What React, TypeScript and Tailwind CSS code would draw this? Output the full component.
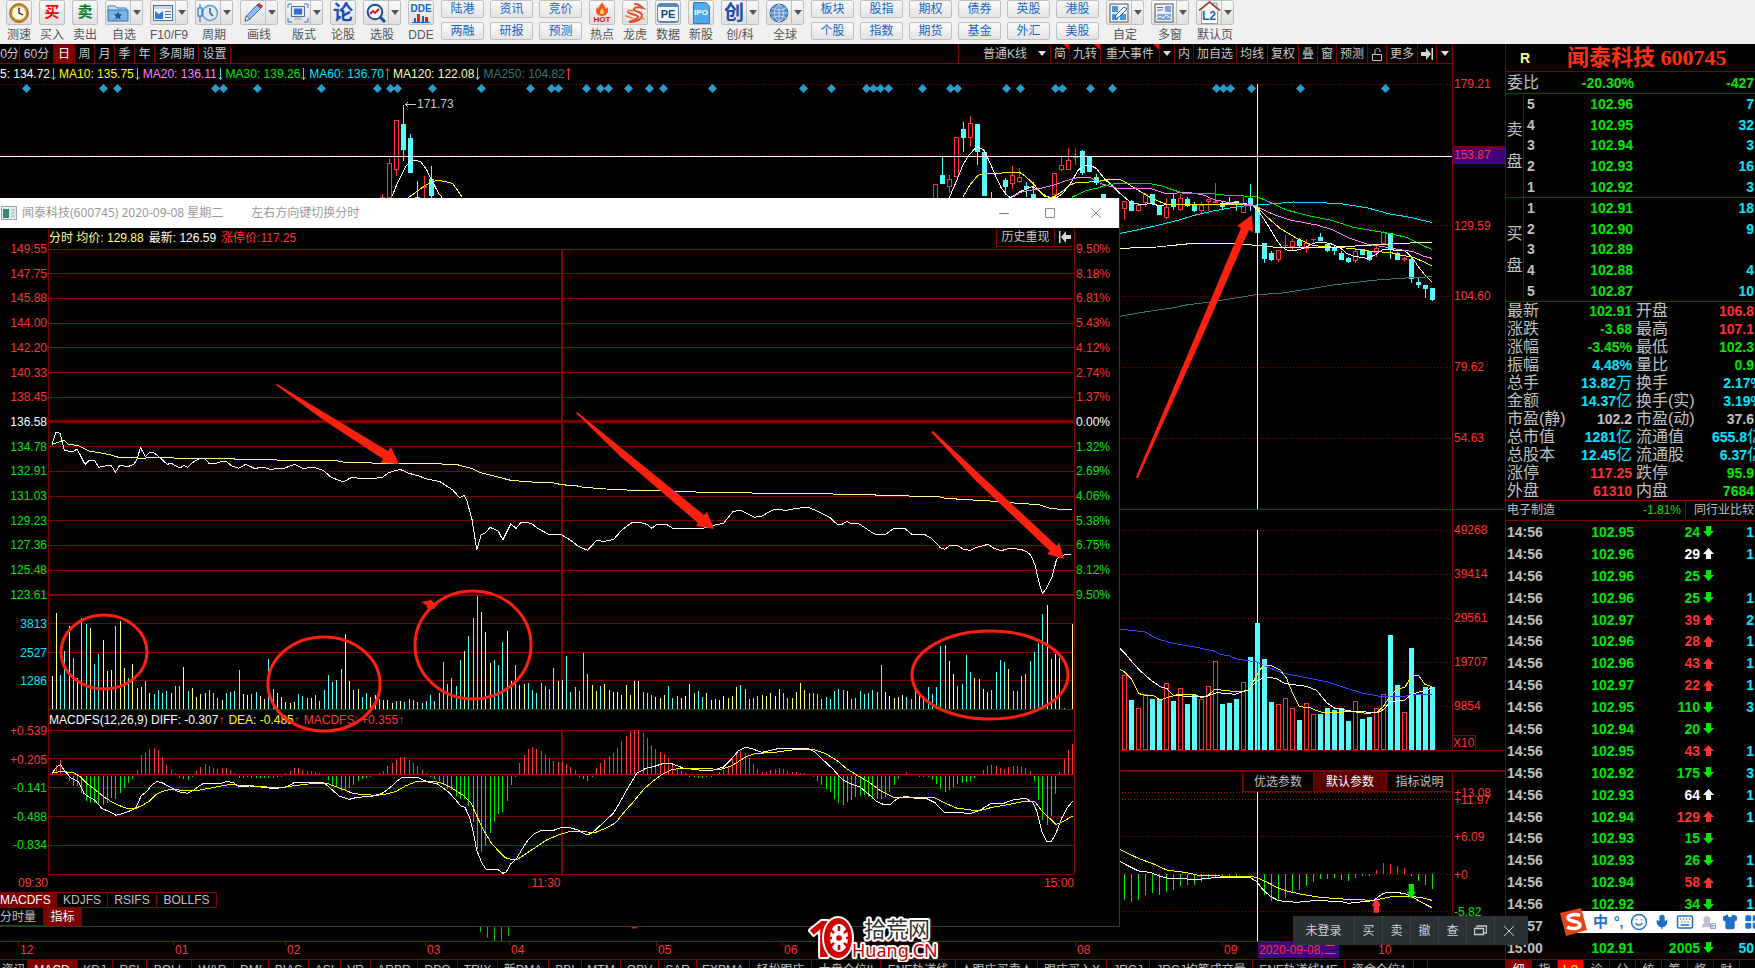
import type { ReactNode } from 'react'
import { Keyboard, LayoutGrid, Mic, Shirt, Smile, UserRound } from 'lucide-react'

type Candle = [kind: 'r' | 'c', x: number, high: number, top: number, bottom: number, low: number]

const RED = '#ff3232'
const CYAN = '#54ffff'
const GREEN = '#00e600'
const GRID = '#800000'
const MARK = '#ff2010'

const INK: Record<string, string> = { w: '#ffffff', y: '#ffff80', c: CYAN }

// One entry per minute: colour key followed by bar height
const MINUTE_VOLUME = `w33 y96 c34 c58 w83 c51 y31 c91 c85 y81 c45 c55 y69 y38 y39 c83 y88 y41 c31 y45
y21 y22 c28 y16 c15 c19 c16 c18 y16 c23 c23 y42 c18 y21 y12 y15 y16 c19 c16 c11
y9 c16 c17 c18 c39 y15 y14 c15 c17 y13 y10 c50 c20 y16 y12 y7 y6 y7 c15 c13
c11 y11 c14 c8 c19 c34 c27 c29 c40 y75 y28 y19 y20 c12 c16 y12 y14 c10 y9 y9
y6 c8 y8 c7 c10 c9 c7 c6 c8 c14 c8 c16 c47 c25 c31 c23 c49 y58 c73 c91
c114 y97 y77 y46 c49 c44 c67 y78 y28 c44 y24 y25 c26 c19 c16 c26 c23 c20 c41 y28
w29 c53 c17 c22 c18 c56 c35 y24 y18 c23 y25 y19 y17 y17 y14 y24 y14 y28 w28 c17
c16 c14 y12 y11 y14 c23 c11 c13 w11 y13 y25 y16 c18 c12 y16 y9 y10 y9 y13 y11
y13 y22 c24 c20 c10 c11 c13 y14 y13 y16 y13 y20 c16 c11 y11 y17 y26 y19 c16 c16
c15 c10 c12 c10 c18 c20 c19 y18 c10 c11 c18 c15 c16 c19 c17 c44 w17 y13 y11 y12
w14 c12 c10 c19 y15 c13 c22 c15 c22 c63 c64 y48 w35 c23 c25 c54 c37 y31 y30 y20
y17 c19 c37 c49 c47 y40 c18 c18 c33 c35 c48 c57 c66 c95 y104 y50 y55 y51 c1 c0 y85`.split(/\s+/)

const MINUTE_MACD = [
  0, 9, 14, 0, -5, -10, -10, -17, -25, -27, -27, -29, -29, -27, -22, -23, -17, -12, -7, -3,
  4, 19, 21, 25, 26, 24, 17, 9, 5, 1, -2, -3, -4, -1, 3, 7, 10, 8, 6, 5,
  6, 6, 4, 1, -2, -2, -1, -2, -2, -2, -2, -2, -2, -1, -1, 1, 3, 6, 6, 4,
  3, 3, 2, 1, 0, -4, -10, -11, -15, -15, -12, -9, -5, -3, -2, -1, 0, 1, 3, 8,
  11, 15, 17, 17, 14, 11, 8, 4, 1, -1, -3, -5, -9, -13, -14, -20, -23, -23, -30, -46,
  -73, -76, -70, -57, -46, -38, -36, -25, -9, -1, 11, 19, 25, 27, 25, 23, 20, 16, 13, 12,
  12, 10, 7, 4, -1, -3, -5, -1, 6, 11, 15, 18, 21, 26, 33, 38, 43, 44, 44, 41,
  36, 29, 25, 22, 20, 16, 10, 6, 3, 1, -1, -1, -2, -2, -1, -1, 0, 2, 4, 8,
  16, 21, 23, 21, 16, 10, 5, 2, 2, 4, 5, 6, 5, 3, 2, 2, 1, 1, 0, -1,
  -5, -9, -13, -16, -23, -27, -29, -26, -24, -21, -20, -19, -21, -23, -23, -23, -21, -16, -9, -3,
  0, 2, 0, 0, -1, -1, -1, -4, -8, -13, -16, -14, -11, -8, -7, -6, -5, -2, 0, 4,
  8, 9, 8, 6, 5, 7, 8, 8, 7, 6, 3, -5, -24, -44, -49, -40, -18, 2, 15, 24, 30,
]

const DIAMONDS = [
  26, 103, 117, 215, 223, 257, 321, 377, 390, 397, 432, 481, 530, 551, 558, 586, 600, 608, 628, 649, 663, 712,
  803, 831, 866, 873, 880, 888, 922, 950, 957, 1006, 1020, 1055, 1062, 1090, 1112, 1216, 1223, 1230, 1251, 1300, 1385,
]

const EARLY_CANDLES: Candle[] = [
  ['r', 382, 194, 197, 199, 199], ['r', 389, 158, 163, 197, 197], ['r', 396, 120, 120, 169, 176],
  ['c', 403, 105, 124, 149, 161], ['c', 410, 134, 138, 172, 173], ['c', 417, 181, 197, 199, 199],
  ['r', 424, 176, 186, 187, 198], ['c', 431, 166, 179, 195, 198], ['r', 935, 184, 184, 199, 199],
  ['c', 942, 157, 175, 183, 183], ['r', 949, 175, 179, 186, 193], ['r', 956, 137, 137, 176, 176],
  ['c', 963, 122, 129, 137, 152], ['r', 970, 116, 123, 137, 146], ['c', 977, 124, 124, 151, 165],
  ['c', 984, 152, 152, 195, 195], ['c', 991, 192, 198, 199, 199], ['c', 1005, 178, 180, 186, 195],
  ['r', 1012, 166, 175, 183, 189], ['r', 1019, 168, 177, 181, 183], ['c', 1026, 182, 186, 188, 197],
  ['c', 1033, 182, 194, 199, 199], ['r', 1054, 173, 173, 194, 197], ['r', 1061, 155, 165, 169, 171],
  ['r', 1068, 148, 160, 169, 170], ['r', 1075, 149, 156, 157, 165], ['c', 1082, 150, 151, 172, 175],
  ['c', 1089, 156, 156, 171, 172], ['c', 1096, 174, 177, 182, 185], ['c', 1103, 194, 194, 199, 199],
]

// Drawn on a grid three times finer than the plot
const LATE_CANDLES: Candle[] = [
  ['r', 73, 64, 64, 86, 119], ['c', 95, 60, 66, 92, 92], ['r', 116, 70, 76, 92, 96], ['r', 137, 40, 45, 67, 80],
  ['c', 157, 42, 45, 70, 76], ['c', 178, 80, 80, 104, 104], ['r', 199, 55, 83, 113, 117], ['c', 220, 42, 60, 80, 90],
  ['r', 241, 42, 55, 88, 94], ['c', 262, 52, 60, 78, 80], ['c', 283, 66, 77, 92, 97], ['r', 304, 67, 77, 92, 104],
  ['r', 325, 60, 60, 66, 92], ['r', 346, 8, 66, 68, 70], ['c', 367, 66, 70, 80, 86], ['c', 388, 52, 70, 73, 76],
  ['c', 409, 62, 64, 75, 92], ['r', 430, 50, 70, 97, 100], ['c', 451, 12, 57, 75, 92], ['c', 472, 76, 88, 158, 158],
  ['c', 493, 190, 190, 237, 248], ['c', 514, 213, 222, 240, 243], ['r', 535, 210, 213, 240, 245], ['r', 556, 165, 196, 198, 205],
  ['r', 577, 178, 184, 200, 210], ['c', 598, 174, 183, 197, 201], ['r', 619, 178, 190, 205, 218], ['r', 640, 176, 178, 180, 190],
  ['c', 661, 160, 174, 182, 182], ['c', 682, 190, 195, 212, 215], ['c', 703, 198, 203, 212, 224], ['c', 724, 214, 222, 238, 238],
  ['c', 745, 231, 235, 245, 250], ['r', 766, 205, 216, 242, 250], ['c', 787, 208, 210, 224, 226], ['c', 808, 213, 215, 240, 243],
  ['r', 829, 195, 205, 218, 230], ['r', 850, 154, 158, 190, 195], ['c', 871, 160, 162, 205, 237], ['c', 892, 217, 220, 238, 238],
  ['r', 913, 230, 237, 239, 246], ['c', 934, 233, 240, 296, 308], ['c', 955, 293, 309, 315, 324], ['c', 976, 318, 318, 326, 354],
  ['c', 997, 323, 327, 360, 363],
]

const DAY_VOLUME = `r347 c420 r445 r403 c417 c417 r370 c423 r385 c432 c405 r420 r379 r304 c432 c429 c417 r367 c291 c189 c297 c426
r433 r415 r445 c480 r430 r463 c462 c444 c450 c444 c483 r424 c477 c471 r445 r403 c225 c375 r457 c264 c405 c381 c381`.split(/\s+/)

const DAY_MACD = [
  1020, 1026, 1020, 1005, 1000, 1005, 995, 990, 978, 975, 975, 965, 955, 950, 948, 948, 947, 943, 943, 943, 1005,
  1022, 1020, 1014, 998, 990, 978, 965, 957, 957, 954, 960, 963, 954, 948, 948, 930, 909, 912, 918, 925, 948, 963, 975, 987,
]

const PRICES = ['149.55', '147.75', '145.88', '144.00', '142.20', '140.33', '138.45', '136.58', '134.78', '132.91', '131.03', '129.23', '127.36', '125.48', '123.61']
const PERCENTS = ['9.50%', '8.18%', '6.81%', '5.43%', '4.12%', '2.74%', '1.37%', '0.00%', '1.32%', '2.69%', '4.06%', '5.38%', '6.75%', '8.12%', '9.50%']

const STATS = [
  ['最新', '102.91', 'g', '开盘', '106.8', 'r'],
  ['涨跌', '-3.68', 'g', '最高', '107.1', 'r'],
  ['涨幅', '-3.45%', 'g', '最低', '102.3', 'g'],
  ['振幅', '4.48%', 'c', '量比', '0.9', 'g'],
  ['总手', '13.82万', 'c', '换手', '2.17%', 'c'],
  ['金额', '14.37亿', 'c', '换手(实)', '3.19%', 'c'],
  ['市盈(静)', '102.2', 's', '市盈(动)', '37.6', 's'],
  ['总市值', '1281亿', 'c', '流通值', '655.8亿', 'c'],
  ['总股本', '12.45亿', 'c', '流通股', '6.37亿', 'c'],
  ['涨停', '117.25', 'r', '跌停', '95.9', 'g'],
  ['外盘', '61310', 'r', '内盘', '7684', 'g'],
]

const TONE: Record<string, string> = {
  g: 'text-[#00e600]',
  r: 'text-[#ff3232]',
  c: 'text-[#00e6ff]',
  s: 'text-[#c0c0c0]',
  w: 'text-white',
}

const TICKS = [
  ['14:56', '102.95', '24', 'g', '1'], ['14:56', '102.96', '29', 'w', '1'], ['14:56', '102.96', '25', 'g', ''],
  ['14:56', '102.96', '25', 'g', '1'], ['14:56', '102.97', '39', 'r', '2'], ['14:56', '102.96', '28', 'r', '1'],
  ['14:56', '102.96', '43', 'r', '1'], ['14:56', '102.97', '22', 'r', '1'], ['14:56', '102.95', '110', 'g', '3'],
  ['14:56', '102.94', '20', 'g', ''], ['14:56', '102.95', '43', 'r', '1'], ['14:56', '102.92', '175', 'g', '3'],
  ['14:56', '102.93', '64', 'w', '1'], ['14:56', '102.94', '129', 'r', '1'], ['14:56', '102.93', '15', 'g', ''],
  ['14:56', '102.93', '26', 'g', '1'], ['14:56', '102.94', '58', 'r', '1'], ['14:56', '102.92', '34', 'g', '1'],
  ['14:57', '', '', '', ''], ['15:00', '102.91', '2005', 'g', '50'],
]

const MONTHS: [string, number][] = [
  ['', 18], ['12', 155], ['01', 112], ['02', 140], ['03', 84], ['04', 147], ['05', 126], ['06', 123], ['', 170], ['08', 147], ['09', 154], ['10', 129],
]

const INDICATORS: [string, string][] = [
  ['资讯', 'w-[28px]'], ['MACD', 'w-[49px]'], ['KDJ', 'w-[36px]'], ['RSI', 'w-[34px]'], ['BOLL', 'w-[45px]'], ['W&R', 'w-[42px]'],
  ['DMI', 'w-[35px]'], ['BIAS', 'w-[40px]'], ['ASI', 'w-[32px]'], ['VR', 'w-[30px]'], ['ARBR', 'w-[47px]'], ['DPO', 'w-[40px]'],
  ['TRIX', 'w-[40px]'], ['新DMA', 'w-[51px]'], ['BBI', 'w-[33px]'], ['MTM', 'w-[39px]'], ['OBV', 'w-[38px]'], ['SAR', 'w-[38px]'],
  ['EXPMA', 'w-[53px]'], ['轻松跟庄', 'w-[62px]'], ['大盘仓位II', 'w-[69px]'], ['ENE轨道线', 'w-[75px]'], ['★跟庄买卖★', 'w-[82px]'],
  ['跟庄买入X', 'w-[69px]'], ['JRCJ', 'w-[43px]'], ['JRCJ均笔成交量', 'w-[103px]'], ['ENE轨道线ME', 'w-[92px]'], ['资金仓位1', 'w-[69px]'],
]

function Plot({ box, children }: { box: string; children: ReactNode }) {
  return (
    <svg viewBox={box} preserveAspectRatio="none" className="block size-full min-h-0 min-w-0" aria-hidden="true">
      {children}
    </svg>
  )
}

function Line({ points, color }: { points: string; color: string }) {
  return <polyline points={points} fill="none" stroke={color} strokeWidth={1} vectorEffect="non-scaling-stroke" shapeRendering="crispEdges" />
}

function Rows({ ys, x1, x2, dotted }: { ys: number[]; x1: number; x2: number; dotted?: boolean }) {
  return (
    <g stroke={dotted ? '#a00000' : GRID} strokeDasharray={dotted ? '1 2' : undefined} shapeRendering="crispEdges">
      {ys.map(y => <line key={y} x1={x1} x2={x2} y1={y + 0.5} y2={y + 0.5} />)}
    </g>
  )
}

function Candles({ data, half }: { data: Candle[]; half: number }) {
  return (
    <g shapeRendering="crispEdges">
      {data.map(([kind, x, high, top, bottom, low]) => {
        const color = kind === 'r' ? RED : CYAN
        return (
          <g key={x} stroke={color} fill={kind === 'r' ? '#000' : CYAN}>
            <line x1={x} x2={x} y1={high} y2={low} vectorEffect="non-scaling-stroke" />
            <rect x={x - half} y={top} width={half * 2} height={bottom - top} vectorEffect="non-scaling-stroke" />
          </g>
        )
      })}
    </g>
  )
}

/* ---------- toolbar ---------- */

const ICONS: Record<string, ReactNode> = {
  clock: (
    <svg viewBox="0 0 20 20" className="size-5">
      <circle cx="10" cy="10" r="8" fill="#fffbe8" stroke="#d89020" strokeWidth="2.4" />
      <circle cx="10" cy="10" r="9.3" fill="none" stroke="#5a3200" strokeWidth=".8" />
      <path d="M10 4.5V10l4 2" fill="none" stroke="#222" strokeWidth="1.3" />
    </svg>
  ),
  folder: (
    <svg viewBox="0 0 22 20" className="h-5 w-[22px]">
      <path d="M1 3h7l2 2h9v3H1z" fill="#cfe3f8" stroke="#3d78b8" />
      <path d="M1 7h20v11H1z" fill="#7db2e8" stroke="#2f6cb0" />
      <path d="m11 8.5 1.2 2.8 3 .2-2.3 1.9.8 3-2.7-1.7-2.7 1.7.8-3-2.3-1.9 3-.2z" fill="#1f4f8f" />
    </svg>
  ),
  news: (
    <svg viewBox="0 0 22 20" className="h-5 w-[22px]">
      <rect x="1.5" y="2.5" width="19" height="15" fill="#fff" stroke="#4a6fa5" />
      <path d="M2 3h18v3H2z" fill="#c9d7ec" />
      <path d="M3 8l4 3 4-3v8H3z" fill="#2b7fe0" />
      <path d="M13 8.5h6M13 11.5h6M13 14.5h6" stroke="#3d6fb0" />
    </svg>
  ),
  period: (
    <svg viewBox="0 0 22 20" className="h-5 w-[22px]">
      <circle cx="13" cy="10" r="7.5" fill="#dcebfa" stroke="#5b9ad6" strokeWidth="1.5" />
      <path d="M13 5v5l3 3" fill="none" stroke="#345" strokeWidth="1.3" />
      <path d="M3 1v18" stroke="#1464b4" />
      <rect x="1" y="5" width="4" height="8" fill="#d8f0ff" stroke="#1464b4" />
    </svg>
  ),
  pencil: (
    <svg viewBox="0 0 22 20" className="h-5 w-[22px]">
      <path d="M3 18l1.5-5L15 2l4 3L8 16z" fill="#8bc1f3" stroke="#2c6bb0" />
      <path d="M15 2l4 3 1.5-2-3.5-2.5z" fill="#e0483c" stroke="#a02820" />
      <path d="M3 18l1.5-5L8 16z" fill="#fff" stroke="#444" strokeWidth=".8" />
    </svg>
  ),
  layout: (
    <svg viewBox="0 0 22 20" className="h-5 w-[22px]">
      <path d="M1 5V1h4M17 1h4v4M21 15v4h-4M5 19H1v-4" fill="none" stroke="#2f7fd6" />
      <rect x="4.5" y="3.5" width="13" height="10" fill="#dfeaf8" stroke="#54719a" />
      <rect x="7" y="5.5" width="8" height="6" fill="#2d6fd0" />
      <path d="M8 14h6l1 3H7z" fill="#b8c2ce" />
    </svg>
  ),
  search: (
    <svg viewBox="0 0 22 20" className="h-5 w-[22px]">
      <circle cx="10" cy="9" r="7.3" fill="#fff" stroke="#1c4fa0" strokeWidth="2" />
      <path d="M15 14l5 5" stroke="#1c4fa0" strokeWidth="3" />
      <path d="M5 11l3-3 2 2 4-4" fill="none" stroke="#d01818" strokeWidth="1.8" />
    </svg>
  ),
  dde: (
    <span className="flex flex-col items-center text-[10px] leading-[11px] font-bold text-[#1464d2]">
      DDE
      <svg viewBox="0 0 18 9" className="h-[9px] w-[18px]">
        <path d="M2 9V4h2v5zM10 9V2h2v7z" fill="#1464d2" />
        <path d="M5 9V0h3v9zM13 9V3h3v6z" fill="#e02020" />
        <path d="M0 8.5h18" stroke="#1464d2" />
      </svg>
    </span>
  ),
  hot: (
    <span className="flex flex-col items-center text-[8px] leading-[7px] font-bold text-[#e01010]">
      <svg viewBox="0 0 16 14" className="h-[14px] w-4">
        <path d="M8 0c1 3 4 4 3.5 7 1-.5 1.5-1.5 1.5-2.5 2 3 2 9-5 9.5C1 14 1 8 3.5 4.5c0 1 .3 2 1 2.5C4 4 7 3 8 0z" fill="#f05828" />
        <path d="M8 6c.5 2 2.5 3 2 5-.4 1.5-3.6 1.5-4 0-.5-2 1.5-3 2-5z" fill="#ffd34a" />
      </svg>
      HOT
    </span>
  ),
  dragon: (
    <svg viewBox="0 0 22 22" className="size-[22px]" fill="none" strokeLinecap="round">
      <path d="M11 2c4 0 6 2 8 4-4-1-8-1-9 1-1 3 9 2 8 7-1 4-7 6-13 6 4-2 9-3 9-5 0-3-8-2-10-5" stroke="#e2502c" strokeWidth="2" />
      <path d="M4 8l5 1M2 14l6 2M17 16l3 1" stroke="#f0803c" strokeWidth="1.5" />
    </svg>
  ),
  pe: (
    <span className="flex h-5 w-[22px] items-center justify-center rounded-sm border-x border-t-4 border-b-2 border-[#5a86bd] bg-[#f4f8fd] text-[11px] leading-3 font-bold text-[#16488e]">PE</span>
  ),
  ipo: (
    <span className="flex h-[22px] w-[17px] items-center justify-center rounded-tr-md border border-[#2e7cc4] bg-[#53a8ec] text-[8px] leading-3 font-bold text-white">IPO</span>
  ),
  globe: (
    <svg viewBox="0 0 20 20" className="size-5">
      <circle cx="10" cy="10" r="9" fill="#5d8fc9" stroke="#3a659c" />
      <path d="M1 10h18M10 1v18M3 5c4 2.5 10 2.5 14 0M3 15c4-2.5 10-2.5 14 0M10 1c-6 5-6 13 0 18M10 1c6 5 6 13 0 18" fill="none" stroke="#dbe9f8" strokeWidth=".8" />
    </svg>
  ),
  custom: (
    <svg viewBox="0 0 20 20" className="size-5">
      <rect x="1" y="1" width="18" height="18" fill="#eef5fc" stroke="#555" />
      <path d="M3 3h6v6H3zM3 11h6v6H3zM11 11h6v6h-6z" fill="#4b93dd" />
      <path d="M6 16l1-4 8-8 3 2-8 8z" fill="#fff" stroke="#1f5da8" />
    </svg>
  ),
  multi: (
    <svg viewBox="0 0 20 20" className="size-5">
      <rect x="1" y="1" width="18" height="18" fill="#eef2fa" stroke="#555" />
      <path d="M3 4.5h6M3 7h6" stroke="#8a5ca8" />
      <path d="M11 3h6v6h-6zM3 11h14v6H3z" fill="#7ba4de" />
      <path d="M3 15l3-2 3 2 3-3 5 3" fill="none" stroke="#fff" />
    </svg>
  ),
  home: (
    <span className="flex h-[23px] w-[23px] flex-col items-center">
      <svg viewBox="0 0 23 10" className="h-[10px] w-[23px] shrink-0">
        <path d="M15 2h4v6h-4z" fill="#eee" stroke="#999" />
        <path d="M4 9l7.5-7L19 9z" fill="#fff" />
        <path d="M1 9.5L11.5 1 22 9.5" fill="none" stroke="#9c4a34" strokeWidth="1.8" />
      </svg>
      <span className="h-[13px] w-[17px] border border-t-0 border-[#999] bg-white text-center text-[12px] leading-[11px] font-bold text-[#1560b4]">L2</span>
    </span>
  ),
}

function Chevron({ light }: { light?: boolean }) {
  return (
    <svg viewBox="0 0 8 5" className="h-[5px] w-2 shrink-0">
      <path d="M0 0h8L4 5z" fill={light ? '#e0e0e0' : '#555'} />
    </svg>
  )
}

function Tool({ label, menu, children }: { label: string; menu?: boolean; children: ReactNode }) {
  return (
    <div className="flex shrink-0 flex-col items-center">
      <button
        aria-label={label}
        className={`flex h-[25px] items-stretch rounded-[2px] border border-[#c0c0c0] bg-gradient-to-b from-[#fafafa] to-[#dedede] ${menu ? 'w-[38px]' : 'w-[26px]'}`}
      >
        <span className="flex flex-1 items-center justify-center overflow-hidden">{children}</span>
        {menu && <span className="flex w-3 items-center justify-center border-l border-[#c0c0c0]"><Chevron /></span>}
      </button>
      <span className="flex h-[19px] w-0 items-center justify-center whitespace-nowrap text-[12px] text-[#555]">{label}</span>
    </div>
  )
}

function Shortcuts({ pairs }: { pairs: string[][] }) {
  return (
    <div className="flex shrink-0 gap-[6px]">
      {pairs.map(pair => (
        <div key={pair[0]} className="flex flex-col gap-1">
          {pair.map(name => (
            <button key={name} className="h-[18px] w-[43px] rounded-[2px] border border-[#c0c0c0] bg-gradient-to-b from-[#fafafa] to-[#e4e4e4] text-[12px] leading-4 text-[#1464c8]">
              {name}
            </button>
          ))}
        </div>
      ))}
    </div>
  )
}

function Toolbar() {
  return (
    <header className="flex h-11 shrink-0 gap-[7px] overflow-hidden bg-[#f0f0f0] pl-[6px]">
      <Tool label="测速">{ICONS.clock}</Tool>
      <Tool label="买入"><b className="text-[15px] text-[#f00000]">买</b></Tool>
      <Tool label="卖出"><b className="text-[15px] text-[#008020]">卖</b></Tool>
      <Tool label="自选" menu>{ICONS.folder}</Tool>
      <Tool label="F10/F9" menu>{ICONS.news}</Tool>
      <Tool label="周期" menu>{ICONS.period}</Tool>
      <Tool label="画线" menu>{ICONS.pencil}</Tool>
      <Tool label="版式" menu>{ICONS.layout}</Tool>
      <Tool label="论股"><b className="text-[20px] leading-none text-[#1c50b0]">论</b></Tool>
      <Tool label="选股" menu>{ICONS.search}</Tool>
      <Tool label="DDE">{ICONS.dde}</Tool>
      <Shortcuts pairs={[['陆港', '两融'], ['资讯', '研报'], ['竞价', '预测']]} />
      <Tool label="热点">{ICONS.hot}</Tool>
      <Tool label="龙虎">{ICONS.dragon}</Tool>
      <Tool label="数据">{ICONS.pe}</Tool>
      <Tool label="新股">{ICONS.ipo}</Tool>
      <Tool label="创/科" menu><b className="text-[20px] leading-none text-[#1c50b0]">创</b></Tool>
      <Tool label="全球" menu>{ICONS.globe}</Tool>
      <Shortcuts pairs={[['板块', '个股'], ['股指', '指数'], ['期权', '期货'], ['债券', '基金'], ['英股', '外汇'], ['港股', '美股']]} />
      <Tool label="自定" menu>{ICONS.custom}</Tool>
      <Tool label="多窗" menu>{ICONS.multi}</Tool>
      <Tool label="默认页" menu>{ICONS.home}</Tool>
    </header>
  )
}

/* ---------- daily chart ---------- */

function PeriodBar() {
  const periods: [string, string][] = [
    ['0分', 'w-[20px]'], ['60分', 'w-[34px]'], ['日', 'w-[21px]'], ['周', 'w-[20px]'], ['月', 'w-[20px]'],
    ['季', 'w-[20px]'], ['年', 'w-[20px]'], ['多周期', 'w-[44px]'], ['设置', 'w-[32px]'],
  ]
  const tools: [string, string][] = [
    ['内', 'w-[19px]'], ['加自选', 'w-[43px]'], ['均线', 'w-[31px]'], ['复权', 'w-[31px]'], ['叠', 'w-[19px]'], ['窗', 'w-[19px]'], ['预测', 'w-[31px]'],
  ]
  const cell = 'relative flex shrink-0 items-center justify-center whitespace-nowrap border-r border-[#800000]'
  return (
    <div className="flex h-5 shrink-0 text-[12px] text-[#c8c8c8]">
      <nav className="flex flex-1 border-b border-[#800000]">
        {periods.map(([name, width]) => (
          <button key={name} className={`${cell} ${width} ${name === '日' ? 'bg-[#800000] text-white' : ''}`}>{name}</button>
        ))}
      </nav>
      <div className="flex border-b border-l border-[#800000]">
        <label className={`${cell} w-[92px]`}>
          <select aria-label="K线类型" className="w-full appearance-none bg-transparent pl-6">
            <option>普通K线</option>
          </select>
          <span className="pointer-events-none pr-1"><Chevron light /></span>
        </label>
        {[['简', 'w-[19px]'], ['九转', 'w-[31px]'], ['重大事件', 'w-[59px]']].map(([name, width]) => (
          <button key={name} className={`${cell} ${width}`}>
            {name}
            <svg viewBox="0 0 6 6" className="absolute top-0 right-0 size-[6px]"><path d="M0 0h6v6z" fill="#ff0000" /></svg>
          </button>
        ))}
        <button aria-label="事件选项" className={`${cell} w-[15px]`}><Chevron light /></button>
        {tools.map(([name, width]) => <button key={name} className={`${cell} ${width}`}>{name}</button>)}
        <button aria-label="锁定" className={`${cell} w-[19px]`}>
          <svg viewBox="0 0 12 14" className="h-[14px] w-3" fill="none" stroke="#c8c8c8"><path d="M1.5 7.5h9v6h-9zM4 7V3.5C4 1 9 1 9 3.5V5" /></svg>
        </button>
        <button className={`${cell} w-[31px]`}>更多</button>
        <button aria-label="跳到最后" className={`${cell} w-[19px]`}>
          <svg viewBox="0 0 12 12" className="size-3"><path d="M0 4h5V0l5 6-5 6V8H0zM10.5 0H12v12h-1.5z" fill="#d8d8d8" /></svg>
        </button>
        <button aria-label="更多选项" className={`${cell} w-[15px] border-r-0`}><Chevron light /></button>
      </div>
      <div className="w-[53px] shrink-0 border-l border-[#800000]" />
    </div>
  )
}

function Averages() {
  const items: [string, string, boolean][] = [
    ['5: 134.72', 'text-white', false],
    ['MA10: 135.75', 'text-[#ffff00]', false],
    ['MA20: 136.11', 'text-[#ff80ff]', false],
    ['MA30: 139.26', 'text-[#00e600]', false],
    ['MA60: 136.70', 'text-[#00e6ff]', true],
    ['MA120: 122.08', 'text-[#ffffb0]', false],
    ['MA250: 104.82', 'text-[#387878]', true],
  ]
  return (
    <div className="flex h-5 shrink-0">
      <div className="flex flex-1 items-center gap-[3px]">
        {items.map(([text, color, up]) => (
          <span key={text} className={`flex items-center gap-px ${color}`}>
            {text}
            <svg viewBox="0 0 5 12" className={`h-3 w-[5px] ${up ? '' : 'rotate-180'}`} fill="none" stroke={up ? RED : '#54c8d0'}>
              <path d="M2.5 0v12M.5 3l2-2.5 2 2.5" />
            </svg>
          </span>
        ))}
      </div>
      <div className="w-[53px] shrink-0 border-l border-[#800000]" />
    </div>
  )
}

function KPlot() {
  return (
    <Plot box="0 84 1452 425">
      <Rows dotted ys={[84, 154, 225, 296, 367, 438]} x1={0} x2={1452} />
      {DIAMONDS.map(x => <path key={x} d={`M${x - 4} 88.5l4.5-4.5 4.5 4.5-4.5 4.5z`} fill="#2a9ccc" />)}
      <Candles data={EARLY_CANDLES} half={2} />
      <g transform="translate(1100 180) scale(0.3333)">
        <Candles data={LATE_CANDLES} half={6} />
        <Line color="#ffffff" points="20,0 60,40 95,70 130,74 155,70 175,77 200,74 340,74 400,68 430,70 455,75 474,90 500,130 530,180 545,200 560,210 580,213 610,205 640,190 660,187 690,190 720,203 740,220 760,228 800,235 825,225 850,208 880,210 915,213 935,230 955,260 975,285 995,305" />
        <Line color="#ffff00" points="65,0 110,28 150,52 195,72 300,75 385,75 455,75 474,85 500,110 540,145 590,175 640,197 680,200 750,205 820,215 870,217 900,225 940,232 970,245 995,258" />
        <Line color="#ff80ff" points="0,10 20,16 60,27 115,25 155,27 195,40 270,38 310,45 345,60 400,70 455,74 474,82 525,105 570,120 650,135 700,150 750,175 800,192 850,200 905,210 940,215 970,228 995,235" />
        <Line color="#00e600" points="0,20 50,10 150,11 185,18 250,40 330,40 370,45 470,50 500,62 560,90 630,108 700,122 760,142 850,157 920,172 960,192 995,208" />
        <Line color="#00e6ff" points="60,160 120,148 170,137 230,122 290,104 340,93 400,82 440,77 500,73 580,66 715,70 800,83 870,102 920,110 995,127" />
        <Line color="#ffffa0" points="60,205 160,202 260,192 375,190 470,196 530,202 700,202 800,196 900,190 995,187" />
        <Line color="#387878" points="60,409 120,398 210,385 260,375 330,366 400,355 470,344 540,340 640,325 700,315 820,301 900,295 995,290" />
      </g>
      <g transform="scale(0.3827 0.3333)">
        <Line color="#ffffff" points="1024,590 1040,545 1060,500 1072,483 1085,481 1100,486 1115,510 1130,545 1145,578 1155,593" />
        <Line color="#ffff00" points="1067,593 1085,578 1110,557 1130,545 1145,541 1165,545 1182,550 1195,570 1208,592" />
      </g>
      <g transform="translate(580 0) scale(0.3827 0.3333)">
        <Line color="#ffffff" points="965,593 985,540 1000,497 1015,467 1030,448 1040,440 1055,450 1068,480 1085,525 1100,562 1115,585 1125,593 1150,575 1180,560 1195,567 1215,590 1245,593 1262,580 1285,545 1300,513 1315,497 1335,497 1350,506 1376,545" />
        <Line color="#ffff00" points="1000,592 1020,553 1040,526 1060,520 1150,518 1165,530 1185,552 1205,578 1225,593 1240,590 1262,573 1275,558 1295,548 1350,545 1385,538 1405,538 1420,542" />
        <Line color="#ff80ff" points="1130,592 1150,577 1205,565 1240,555 1265,544 1300,533 1330,532 1360,546" />
        <Line color="#00e600" points="1285,592 1320,573 1360,562" />
      </g>
      <g stroke="#fff" shapeRendering="crispEdges">
        <path d="M0 156.5H1452M1257.5 84V509" />
        <path d="M405 104.5h11M405 104.5l3-2M405 104.5l3 2" stroke="#c8c8c8" />
      </g>
      <text x="417" y="108" fontSize="12" fill="#c8c8c8">171.73</text>
    </Plot>
  )
}

function VolumePlot() {
  return (
    <Plot box="0 510 1452 240">
      <Rows dotted ys={[530, 574, 618, 662, 706]} x1={0} x2={1452} />
      <path d="M1257.5 530V750" stroke="#fff" shapeRendering="crispEdges" />
      <g transform="translate(1100 560) scale(0.3333)" shapeRendering="crispEdges">
        {DAY_VOLUME.map((bar, i) => {
          const top = Number(bar.slice(1))
          const hollow = bar[0] === 'r'
          return (
            <rect key={i} x={66 + i * 21 + (hollow ? 2 : 0)} y={top} width={hollow ? 11 : 15} height={569 - top}
              fill={hollow ? '#000' : CYAN} stroke={hollow ? RED : 'none'} vectorEffect="non-scaling-stroke" />
          )
        })}
        <Line color="#c02020" points="473,310 473,571" />
        <Line color="#4040ff" points="60,207 135,216 175,238 220,250 290,262 345,274 365,284 390,288 410,297 470,306 500,320 550,340 620,353 680,365 740,385 790,400 840,409 915,409 935,403 995,403" />
        <Line color="#ffff00" points="60,328 75,337 95,358 116,400 130,405 160,406 180,420 205,412 235,403 285,403 305,414 325,405 345,388 400,394 430,394 450,388 460,365 474,340 490,315 515,318 540,330 560,355 580,405 598,440 630,443 660,456 700,457 760,455 800,460 830,458 850,440 870,408 890,388 915,382 935,346 955,346 975,373 995,380" />
        <Line color="#ffffff" points="60,265 75,280 95,304 120,332 150,358 180,380 200,385 220,406 290,411 320,409 350,398 405,403 445,390 470,364 495,350 530,356 555,371 620,379 650,391 680,428 705,445 760,454 835,458 855,445 870,425 915,420 935,403 965,394 995,385" />
      </g>
    </Plot>
  )
}

function MacdPlot() {
  return (
    <Plot box="0 792 1452 149">
      <Rows dotted ys={[792, 799, 836, 874, 911]} x1={0} x2={1452} />
      <path d="M1257.5 792V941" stroke="#fff" shapeRendering="crispEdges" />
      <g transform="translate(1100 560) scale(0.3333)">
        {DAY_MACD.map((y, i) => (
          <Line key={i} color={y > 943 ? GREEN : RED} points={`${73 + i * 21},943 ${73 + i * 21},${y}`} />
        ))}
        <Line color="#ffff00" points="60,869 115,895 160,912 200,930 260,938 300,947 460,950 474,955 500,966 530,982 560,993 600,1002 660,1012 740,1018 820,1021 870,1011 930,1009 965,1013 995,1021" />
        <Line color="#ffffff" points="60,905 115,933 150,937 180,949 210,956 300,958 350,952 450,952 470,965 490,990 510,1008 535,1022 590,1027 640,1022 720,1024 745,1030 820,1022 850,1000 870,997 915,1000 935,1010 970,1030 995,1043" />
        <path d="M829 1015l14 22h-6v21h-16v-21h-6z" fill={RED} />
        <path d="M934 1017l14-22h-6v-23h-16v23h-6z" fill={GREEN} />
      </g>
      <path d="M480.5 926v6M487.5 926v12M494.5 926v15M501.5 926v15M508.5 926v10" stroke="#00c000" shapeRendering="crispEdges" />
      <path d="M632 927.5h5" stroke="#c02020" strokeWidth="2" />
    </Plot>
  )
}

function DailyChart() {
  const axis = 'flex w-[53px] shrink-0 flex-col border-l border-[#800000] leading-4 text-[#ff3232]'
  return (
    <>
      <PeriodBar />
      <Averages />
      <section className="flex min-h-0 flex-1">
        <div className="min-w-0 flex-1"><KPlot /></div>
        <div className={axis}>
          <div className="-mt-2 mb-[63px] flex flex-1 flex-col justify-between">
            {['179.21', '153.87', '129.59', '104.60', '79.62', '54.63'].map(v => (
              <span key={v} className={`pl-px ${v === '153.87' ? '-my-px border-y border-[#800000] bg-[#400080]' : ''}`}>{v}</span>
            ))}
          </div>
        </div>
      </section>
      <section className="flex h-[242px] shrink-0 border-y border-[#800000]">
        <div className="min-w-0 flex-1"><VolumePlot /></div>
        <div className={`${axis} justify-between pt-3`}>
          <div className="flex flex-col gap-7 pl-px">
            {['49268', '39414', '29561', '19707', '9854'].map(v => <span key={v}>{v}</span>)}
          </div>
          <span className="w-[23px] border-t border-r border-[#800000] leading-[14px]">X10</span>
        </div>
      </section>
      <div className="h-[21px] shrink-0 border-b-2 border-[#800000]" />
      <section className="flex h-[169px] shrink-0">
        <div className="flex min-w-0 flex-1 flex-col">
          <div className="flex h-5 shrink-0 justify-end text-[12px] text-[#c0c0c0]">
            <button className="w-[72px] border border-t-0 border-[#800000]">优选参数</button>
            <button className="w-[72px] border-b border-[#800000] bg-[#580000] text-white">默认参数</button>
            <button className="w-[66px] border border-t-0 border-r-0 border-[#800000]">指标说明</button>
          </div>
          <div className="min-h-0 flex-1"><MacdPlot /></div>
        </div>
        <div className={`${axis} pt-[13px] pl-px`}>
          <span className="h-[7px]">+13.08</span>
          <span className="h-[37px]">+11.97</span>
          <span className="h-[38px]">+6.09</span>
          <span className="h-[37px]">+0</span>
          <span className="text-[#00e600]">-5.82</span>
        </div>
      </section>
      <div className="flex h-[18px] shrink-0 border-t border-[#800000] leading-4 text-[#ff3232]">
        {MONTHS.map(([month, span], i) => (
          <div key={i} className="flex shrink-0" style={{ width: `${(span / 1505) * 100}%` }}>
            {month && <span className="h-1 w-[2px] border-l border-[#800000]" />}
            <span className={month === '09' ? 'w-[34px]' : ''}>{month}</span>
            {month === '09' && <span className="h-4 w-[81px] whitespace-nowrap bg-[#400080] px-px">2020-09-08,二</span>}
          </div>
        ))}
      </div>
      <nav className="flex h-[9px] shrink-0 border-t border-[#800000] text-[#c0c0c0]">
        {INDICATORS.map(([name, width]) => (
          <button
            key={name}
            className={`h-[19px] shrink-0 whitespace-nowrap border-r border-[#800000] leading-[18px] ${width} ${name === 'MACD' ? 'bg-[#800000] text-white' : ''}`}
          >
            {name}
          </button>
        ))}
        <span className="h-[19px] w-[14px] border-r border-[#800000]" />
      </nav>
    </>
  )
}

/* ---------- minute chart window ---------- */

function AxisLabels({ values, pad }: { values: string[]; pad: string }) {
  return (
    <div className={`flex flex-col justify-between ${pad}`}>
      {values.map((v, i) => (
        <span key={i} className={i < 7 ? 'text-[#ff3232]' : i === 7 ? 'text-white' : 'text-[#00e600]'}>{v}</span>
      ))}
    </div>
  )
}

function MinutePrice() {
  const ys = Array.from({ length: 15 }, (_, i) => Math.round(248.5 + i * 24.7))
  return (
    <Plot box="49 247 1025 349">
      <Rows ys={ys} x1={48} x2={1075} />
      <g stroke={GRID} shapeRendering="crispEdges">
        <path d="M48 421.5H1075" strokeWidth="3" />
        <path d="M48 595H1075M562 249V596" strokeWidth="2" />
      </g>
      <g transform="translate(0 200) scale(0.35714 0.33333)">
        <Line color="#ffff80" points="145,733 180,721 192,733 220,737 250,754 275,757 310,765 332,772 370,773 400,775 430,772 480,772 490,775 650,775 660,778 770,778 780,781 935,781 965,787 1035,787 1045,790 1230,790 1240,793 1280,794 1320,805 1345,818 1390,830 1430,841 1490,846 1550,849 1568,853" />
        <Line color="#ffffff" points="145,733 157,697 168,700 180,751 203,756 216,747 238,793 250,781 265,781 276,802 298,797 312,797 323,817 335,797 360,799 375,793 385,775 393,742 407,770 418,758 430,758 442,767 468,793 480,790 503,804 515,797 525,802 540,787 560,775 575,777 585,790 605,790 620,784 633,784 648,797 668,805 688,793 712,805 740,802 755,808 795,805 825,793 848,805 880,802 905,811 925,830 948,841 962,845 985,832 1020,837 1070,833 1088,818 1120,808 1145,820 1170,827 1195,837 1232,845 1250,858 1268,870 1287,893 1300,886 1308,905 1322,960 1335,1050 1347,1005 1360,998 1372,982 1395,993 1408,1020 1430,972 1445,985 1458,968 1475,967 1490,972 1505,985 1535,1002 1550,1005 1573,1005" />
      </g>
      <g transform="translate(560 380) scale(0.35714 0.33333)">
        <Line color="#ffff80" points="0,314 45,317 65,322 130,327 205,331 285,332 380,335 385,338 535,338 545,341 760,341 770,344 880,344 890,347 975,347 985,350 1060,350 1080,355 1140,359 1205,363 1270,369 1340,374 1370,384 1400,388 1435,388" />
        <Line color="#ffffff" points="5,465 30,481 50,498 77,511 102,482 125,484 150,478 175,448 200,429 225,427 245,434 257,445 270,434 298,433 316,445 400,445 430,436 458,430 485,394 505,391 520,398 545,412 565,408 600,388 635,391 660,385 695,382 720,393 755,412 775,432 790,433 803,424 815,430 838,432 860,448 880,462 912,463 935,445 965,445 985,463 1020,463 1040,475 1065,503 1077,508 1092,496 1112,496 1130,508 1148,511 1165,503 1198,493 1215,505 1235,512 1260,505 1290,508 1305,514 1318,525 1330,555 1342,610 1351,640 1362,625 1378,590 1390,540 1400,527 1430,522" />
      </g>
    </Plot>
  )
}

function MinuteVolume() {
  return (
    <Plot box="49 596 1025 114">
      <Rows ys={[623, 652, 680, 709]} x1={48} x2={1075} />
      <path d="M562 595V710" stroke={GRID} strokeWidth="2" />
      {MINUTE_VOLUME.map((bar, i) => (
        <rect key={i} x={Math.round(51.5 + i * 4.253)} y={709 - Number(bar.slice(1))} width="1" height={Number(bar.slice(1))} fill={INK[bar[0]]} />
      ))}
    </Plot>
  )
}

function MinuteMacd() {
  return (
    <Plot box="49 729 1025 146">
      <Rows ys={[730, 758, 787, 816, 845, 874]} x1={48} x2={1075} />
      <path d="M48 774.5H1075" stroke="#b00000" />
      <path d="M562 730V875" stroke={GRID} strokeWidth="2" />
      {MINUTE_MACD.map((v, i) => (
        <rect key={i} x={Math.round(51.5 + i * 4.253)} y={v > 0 ? 774 - v : 776} width="1" height={Math.abs(v)} fill={v > 0 ? RED : GREEN} />
      ))}
      <g transform="translate(0 560) scale(0.35714 0.33333)">
        <Line color="#ffffff" points="145,640 160,620 170,614 180,632 200,655 220,665 235,700 250,712 265,720 285,745 310,757 325,766 345,760 370,750 382,740 395,708 410,695 425,675 440,664 455,669 478,682 500,695 525,700 540,692 555,680 572,669 590,672 615,672 635,664 655,669 668,679 700,678 740,682 765,686 800,682 825,667 880,668 905,667 920,680 950,708 978,718 1000,712 1040,709 1070,700 1090,685 1110,665 1125,653 1172,653 1195,665 1225,672 1255,695 1275,718 1290,738 1302,742 1315,772 1325,815 1335,872 1350,910 1360,927 1395,929 1408,940 1418,935 1430,912 1445,898 1465,862 1480,838 1495,822 1515,811 1550,811 1568,804" />
        <Line color="#ffff00" points="145,640 170,634 205,638 225,650 245,672 265,688 290,710 310,724 335,737 355,745 380,745 400,735 420,722 435,705 455,694 480,688 530,693 560,690 600,682 640,674 700,677 760,682 790,682 840,675 880,670 920,672 940,680 965,690 990,701 1050,706 1075,704 1110,694 1135,678 1165,665 1215,664 1240,670 1265,684 1300,708 1320,730 1335,768 1355,812 1375,848 1400,878 1415,893 1430,898 1450,897 1470,883 1500,862 1530,840 1568,823" />
      </g>
      <g transform="translate(560 728) scale(0.35714 0.33333)">
        <Line color="#ffffff" points="0,298 25,298 50,306 75,321 90,315 105,300 150,255 165,228 190,180 215,136 240,121 265,115 290,106 315,108 345,120 380,125 400,127 430,126 458,117 480,93 500,68 520,57 540,63 565,73 580,70 610,62 695,62 715,73 740,99 765,124 790,154 810,166 840,177 865,199 885,219 905,229 925,229 945,211 970,205 990,210 1025,211 1050,224 1075,252 1150,256 1175,247 1205,228 1245,225 1270,215 1305,211 1325,225 1335,250 1350,313 1363,340 1376,340 1388,318 1405,270 1420,240 1435,220" />
        <Line color="#ffff00" points="0,319 30,310 100,313 125,302 155,285 180,252 205,222 235,183 260,160 285,140 315,124 345,121 380,121 450,124 480,114 520,87 545,77 600,73 650,66 715,66 740,75 775,97 800,120 830,141 865,162 900,190 935,208 970,208 1050,210 1080,226 1110,240 1150,246 1170,249 1210,238 1250,231 1290,222 1330,222 1350,250 1370,270 1388,289 1405,283 1435,264" />
      </g>
    </Plot>
  )
}

function MinuteWindow() {
  const row = 'grid grid-cols-[48px_minmax(0,1fr)_44px] leading-4'
  const middle = 'flex min-h-0 min-w-0 flex-col border-x border-[#800000]'
  return (
    <div className="absolute top-[154px] right-[385px] bottom-[41px] left-0 flex flex-col border-r border-b border-[#383838] bg-black">
      <div className="flex h-[30px] shrink-0 items-center bg-white font-['Noto_Sans','Noto_Sans_CJK_SC',sans-serif] text-[12px] text-[#999]">
        <svg viewBox="0 0 16 14" className="ml-px h-[14px] w-4">
          <rect x=".5" y=".5" width="15" height="13" fill="#e8eef2" stroke="#9aa" />
          <path d="M2 3h6v9H2z" fill="#2f8a74" />
          <path d="M10 4h4M10 7h4M10 10h4" stroke="#9ab" />
        </svg>
        <span className="ml-[5px]">闻泰科技(600745) 2020-09-08 星期二</span>
        <span className="ml-7">左右方向键切换分时</span>
        <div className="ml-auto flex">
          <button aria-label="最小化" className="flex w-[46px] justify-center"><svg viewBox="0 0 10 10" className="size-[10px]"><path d="M0 5.5h10" stroke="#888" /></svg></button>
          <button aria-label="最大化" className="flex w-[46px] justify-center"><svg viewBox="0 0 10 10" className="size-[10px]"><path d="M.5.5h9v9h-9z" fill="none" stroke="#888" /></svg></button>
          <button aria-label="关闭" className="flex w-[46px] justify-center"><svg viewBox="0 0 10 10" className="size-[10px]"><path d="M0 0l10 10M10 0L0 10" stroke="#888" /></svg></button>
        </div>
      </div>

      <div className={`${row} min-h-0 flex-1 grid-rows-[minmax(0,1fr)]`}>
        <AxisLabels values={PRICES} pad="mt-[13px] -mb-[7px] text-right pr-px" />
        <div className={middle}>
          <div className="flex h-[19px] shrink-0 items-center gap-[5px]">
            <span className="text-[#ffff80]">分时 均价: 129.88</span>
            <span className="text-white">最新: 126.59</span>
            <span className="text-[#ff3232]">涨停价:117.25</span>
            <button className="ml-auto h-full w-[59px] border-x border-b border-[#800000] text-[#c8c8c8]">历史重现</button>
            <button aria-label="回到开始" className="-ml-[5px] flex h-full w-[19px] items-center justify-center border-b border-[#800000]">
              <svg viewBox="0 0 12 12" className="size-3"><path d="M12 4H7V0L2 6l5 6V8h5zM0 0h1.5v12H0z" fill="#d8d8d8" /></svg>
            </button>
          </div>
          <div className="min-h-0 flex-1"><MinutePrice /></div>
        </div>
        <AxisLabels values={PERCENTS} pad="mt-[13px] -mb-[7px] pl-px" />
      </div>

      <div className={`${row} h-[114px] shrink-0 grid-rows-[114px]`}>
        <div className="mt-5 mb-[21px] flex flex-col justify-between pr-px text-right text-[#00e6ff]">
          {['3813', '2527', '1286'].map(v => <span key={v}>{v}</span>)}
        </div>
        <div className={middle}><MinuteVolume /></div>
      </div>

      <div className={`${row} h-[165px] shrink-0 grid-rows-[165px]`}>
        <div className="mt-[13px] mb-[22px] flex flex-col justify-between pr-px text-right text-[#ff3232]">
          <span>+0.539</span>
          <span>+0.205</span>
          <span className="text-[#00e600]">-0.141</span>
          <span className="text-[#00e600]">-0.488</span>
          <span className="text-[#00e600]">-0.834</span>
        </div>
        <div className={middle}>
          <div className="flex h-[19px] shrink-0 items-center gap-1 text-white">
            <span>MACDFS(12,26,9) DIFF: -0.307<span className="text-[#ff3232]">↑</span></span>
            <span className="text-[#ffff00]">DEA: -0.485<span className="text-[#ff3232]">↑</span></span>
            <span className="text-[#ff3232]">MACDFS: +0.355↑</span>
          </div>
          <div className="min-h-0 flex-1"><MinuteMacd /></div>
        </div>
      </div>

      <div className="flex h-[17px] shrink-0 justify-between pr-[45px] leading-4 text-[#ff3232]">
        <span className="w-[48px] text-right">09:30</span>
        <span>11:30</span>
        <span>15:00</span>
      </div>
      <nav className="flex h-4 shrink-0 leading-[14px] text-[#c0c0c0]">
        <button className="w-[57px] bg-[#800000] text-left text-white">MACDFS</button>
        <button className="w-[51px] border-y border-r border-[#800000]">KDJFS</button>
        <button className="w-[49px] border-y border-r border-[#800000]">RSIFS</button>
        <button className="w-[60px] border-y border-r border-[#800000]">BOLLFS</button>
      </nav>
      <nav className="flex h-[18px] shrink-0 text-[12px] text-[#c0c0c0]">
        <button className="w-[43px] border-b border-[#800000] text-left whitespace-nowrap">分时量</button>
        <button className="w-[39px] bg-[#800000] whitespace-nowrap text-white">指标</button>
      </nav>
    </div>
  )
}

function Annotations() {
  return (
    <svg viewBox="0 44 1505 924" preserveAspectRatio="none" className="pointer-events-none absolute inset-0 size-full" aria-hidden="true">
      <g fill={MARK}>
        <path d="M276 385l1-1 111 67 3-4 8 17-18-1 2-4-61-40z" />
        <path d="M576 413l1-1 127 103 3-3 7 17-18-3 2-3-77-66z" />
        <path d="M931 432l2-1 124 115 2-4 5 17-17-5 3-3-75-71z" />
        <path d="M1137 478l-1-1 105-249-4-2 15-11 1 17-4-2-50 114-61 134z" />
        <path d="M421 602l10-2 3 3 4 1-4 5-6 0-2-4z" />
      </g>
      <g fill="none" stroke={MARK} strokeWidth="3">
        <ellipse cx="104" cy="652" rx="43" ry="37" />
        <ellipse cx="324" cy="684" rx="56" ry="47" />
        <ellipse cx="473" cy="645" rx="58" ry="54" />
        <ellipse cx="990" cy="675" rx="78" ry="44" />
      </g>
    </svg>
  )
}

/* ---------- quote panel ---------- */

function Book({ side, rows }: { side: string; rows: string[][] }) {
  return (
    <div className="flex h-[104px] shrink-0 border-b border-[#800000]">
      <div className="flex w-[18px] flex-col items-center justify-center gap-4 border-r border-[#800000] text-[16px] leading-4 font-normal text-[#c0c0c0]">
        <span>{side}</span>
        <span>盘</span>
      </div>
      <table className="h-full flex-1 table-fixed">
        <tbody>
          {rows.map(([level, price, volume]) => (
            <tr key={level}>
              <td className="w-[26px] p-0 pl-[3px] text-[#c0c0c0]">{level}</td>
              <td className="w-[83px] p-0 text-right text-[#00e600]">{price}</td>
              <td className="p-0 pr-px text-right text-[#00e6ff]">{volume}</td>
            </tr>
          ))}
        </tbody>
      </table>
    </div>
  )
}

function Amount({ value }: { value: string }) {
  const unit = value.match(/[万亿]$/)?.[0]
  return <>{unit ? value.slice(0, -1) : value}{unit && <span className="text-[16px] font-normal">{unit}</span>}</>
}

function QuotePanel() {
  return (
    <aside className="flex w-[250px] shrink-0 flex-col overflow-hidden border-l border-[#800000] text-[14px] leading-4 font-bold">
      <div className="flex h-[28px] shrink-0 items-center border-b border-[#800000]">
        <span className="ml-[14px] w-[47px] text-[14px] text-[#ffff80]">R</span>
        <h1 className="whitespace-nowrap font-['Liberation_Serif','Noto_Sans_CJK_SC',serif] text-[22px] text-[#ff3010]">闻泰科技 600745</h1>
      </div>
      <div className="flex h-[22px] shrink-0 items-center border-b border-[#800000] text-[#00e600]">
        <span className="pl-px text-[16px] font-normal text-[#c0c0c0]">委比</span>
        <span className="w-[95px] text-right">-20.30%</span>
        <span className="ml-auto pr-px">-427</span>
      </div>
      <Book side="卖" rows={[['5', '102.96', '7'], ['4', '102.95', '32'], ['3', '102.94', '3'], ['2', '102.93', '16'], ['1', '102.92', '3']]} />
      <Book side="买" rows={[['1', '102.91', '18'], ['2', '102.90', '9'], ['3', '102.89', ''], ['4', '102.88', '4'], ['5', '102.87', '10']]} />
      <dl className="shrink-0 border-b border-[#800000]">
        {STATS.map(([a, av, at, b, bv, bt]) => (
          <div key={a} className="flex h-[18px] items-center whitespace-nowrap">
            <dt className="pl-px text-[16px] font-normal text-[#c0c0c0]">{a}</dt>
            <dd className={`ml-auto ${TONE[at]}`}><Amount value={av} /></dd>
            <div className="ml-1 flex w-[119px] shrink-0 items-center">
              <dt className="text-[16px] font-normal text-[#c0c0c0]">{b}</dt>
              <dd className={`ml-auto ${/[%亿]$/.test(bv) ? '-mr-2' : 'pr-px'} ${TONE[bt]}`}><Amount value={bv} /></dd>
            </div>
          </div>
        ))}
      </dl>
      <div className="flex h-5 shrink-0 border-b border-[#800000] text-[12px] leading-[19px] font-normal text-[#c0c0c0]">
        <a href="#sector" className="pl-px">电子制造</a>
        <span className="ml-auto pr-1 text-[#00e600]">-1.81%</span>
        <a href="#peers" className="w-[70px] border-l border-[#800000] pl-2 whitespace-nowrap">同行业比较</a>
      </div>
      <div className="min-h-0 flex-1">
        <table className="h-full w-full table-fixed text-[#c0c0c0]">
          <tbody>
            {TICKS.map(([time, price, volume, tone, count], i) => (
              <tr key={i}>
                <td className="w-[60px] p-0 pl-px">{time}</td>
                <td className="w-[68px] p-0 text-right text-[#00e600]">{price}</td>
                <td className={`w-[66px] p-0 text-right ${TONE[tone] ?? ''}`}>{volume}</td>
                <td className={`w-[18px] p-0 ${TONE[tone] ?? ''}`}>
                  {tone && (
                    <svg viewBox="0 0 11 11" className={`ml-[3px] size-[11px] ${tone === 'g' ? 'rotate-180' : ''}`}>
                      <path d="M5.5 0L11 6H8V11H3V6H0z" fill="currentColor" />
                    </svg>
                  )}
                </td>
                <td className="p-0 pr-px text-right text-[#00e6ff]">{count}</td>
              </tr>
            ))}
          </tbody>
        </table>
      </div>
      <nav className="flex h-[9px] shrink-0 border-t border-[#800000] text-[12px] font-normal text-[#c0c0c0]">
        {['细', '指', 'L2', '诊', '分', '统', '筹', '烙', '财'].map(name => (
          <button
            key={name}
            className={`h-[19px] w-[26px] shrink-0 border-r border-[#800000] leading-[18px] ${
              name === '细' ? 'bg-[#800000] text-white' : name === 'L2' ? 'bg-[#ff0000] text-[14px] text-[#ffff00]' : ''
            }`}
          >
            {name}
          </button>
        ))}
      </nav>
    </aside>
  )
}

/* ---------- floating bars ---------- */

function TradeBar() {
  return (
    <div className="absolute right-[227px] bottom-[23px] flex h-[29px] bg-[#2b3235] pr-[5px] text-[12px] text-[#d0d0d0]">
      <button className="w-[62px] border-r border-[#3a4246]">未登录</button>
      {['买', '卖', '撤', '查'].map(name => <button key={name} className="w-7 border-r border-[#3a4246]">{name}</button>)}
      <button aria-label="窗口" className="flex w-7 items-center justify-center border-r border-[#3a4246]">
        <svg viewBox="0 0 13 11" className="h-[11px] w-[13px]" fill="none" stroke="#c8c8c8"><path d="M3 2.5V1h9.5v7H10M.5 3.5h9v6h-9z" strokeWidth="1.3" /></svg>
      </button>
      <button aria-label="关闭交易栏" className="flex w-7 items-center justify-center">
        <svg viewBox="0 0 10 10" className="size-[10px]"><path d="M0 0l10 10M10 0L0 10" stroke="#c8c8c8" /></svg>
      </button>
    </div>
  )
}

function InputBar() {
  return (
    <div className="absolute right-0 bottom-[35px] flex h-[22px] w-[180px] items-center bg-white text-[#1b70c8]">
      <svg viewBox="0 0 28 28" className="-ml-4 size-7 shrink-0">
        <path d="M1 5L22 0l6 22-21 6z" fill="#e8441a" />
        <path d="M21 7.5c-4-2-12-1-12 2.5 0 4 12 2.5 12 7 0 4-9 4.500-13 2" fill="none" stroke="#fff" strokeWidth="3.6" />
      </svg>
      <div className="flex flex-1 items-center gap-[6px] overflow-hidden pl-1.5">
        <b className="w-[15px] text-[15px] leading-4">中</b>
        <b className="w-[17px] text-[14px] leading-4">°,</b>
        <Smile className="size-[18px] shrink-0" strokeWidth={2} />
        <Mic className="size-4 shrink-0" fill="currentColor" strokeWidth={2} />
        <Keyboard className="size-[18px] shrink-0" strokeWidth={2} />
        <span className="flex shrink-0 items-end text-[#b8c4d4]">
          <UserRound className="size-[14px]" fill="currentColor" />
          <svg viewBox="0 0 6 6" className="-ml-1 size-[6px]" fill="none" stroke="#8fa0b8"><path d="M.5.5h5v5h-5zM1 2.5h4M3 2.5V5" /></svg>
        </span>
        <Shirt className="size-4 shrink-0" fill="currentColor" />
        <LayoutGrid className="size-4 shrink-0" fill="currentColor" />
      </div>
    </div>
  )
}

function SiteMark() {
  const teeth = [0, 45, 90, 135, 180, 225, 270, 315]
  return (
    <svg viewBox="0 0 134 48" className="absolute bottom-1.5 left-[53.7%] h-12 w-[134px]" role="img" aria-label="10 拾荒网 Huang.CN">
      <g stroke="#fff" strokeWidth="4" strokeLinejoin="round" paintOrder="stroke">
        <text x="-1" y="43" fontSize="50" fontWeight="bold" fontFamily="Noto Sans, sans-serif" fill="#d00000">1</text>
        <ellipse cx="30" cy="24" rx="14" ry="20" fill="#d00000" />
        <text x="56" y="23" fontSize="22" fontFamily="Noto Sans CJK SC, sans-serif" fill="#333">拾荒网</text>
        <text x="44" y="43" fontSize="18" fontFamily="Noto Sans, sans-serif" fill="#d00000">Huang.CN</text>
      </g>
      <ellipse cx="31" cy="24" rx="9" ry="14" fill="#fff" />
      {teeth.map(a => <path key={a} d="M31 12v5" stroke="#d00000" strokeWidth="2.5" transform={`rotate(${a} 31 24)`} />)}
      <circle cx="31" cy="24" r="2.8" fill="#d00000" />
    </svg>
  )
}

export default function App() {
  return (
    <div className="relative flex h-screen w-full flex-col overflow-hidden bg-black font-['Liberation_Sans','Noto_Sans_CJK_SC',sans-serif] text-[12px]">
      <Toolbar />
      <div className="flex min-h-0 flex-1">
        <main className="relative flex min-w-0 flex-1 flex-col">
          <DailyChart />
          <MinuteWindow />
          <Annotations />
          <SiteMark />
        </main>
        <QuotePanel />
      </div>
      <TradeBar />
      <InputBar />
    </div>
  )
}
